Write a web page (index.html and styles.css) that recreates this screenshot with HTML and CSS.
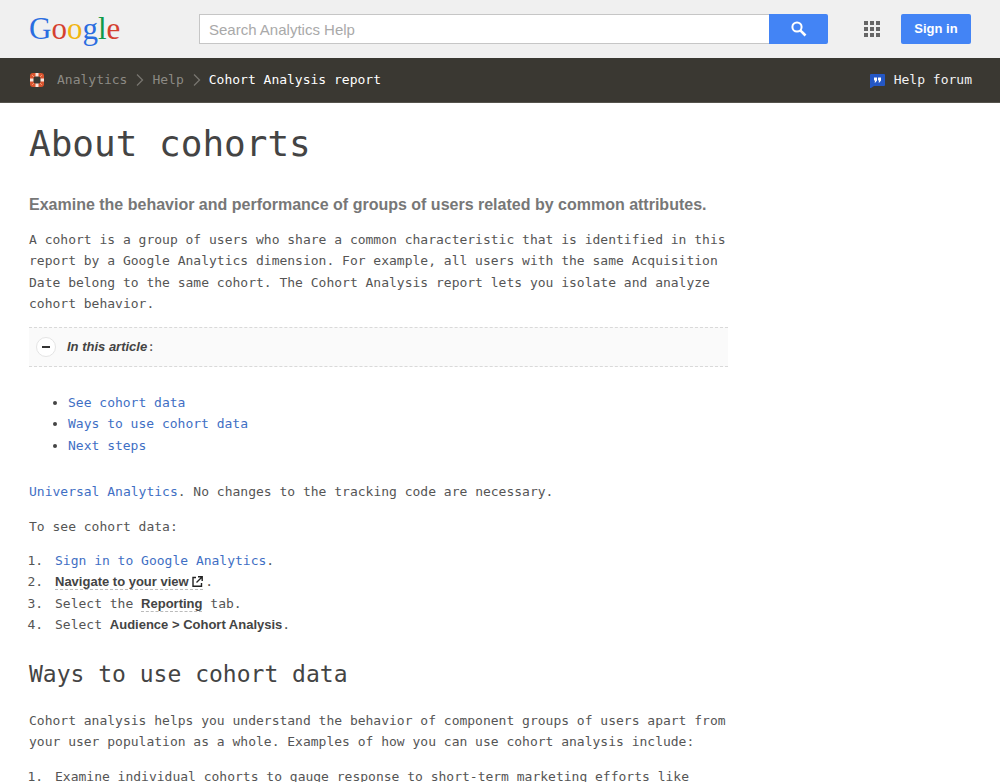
FILE: index.html
```
<!DOCTYPE html>
<html lang="en">
<head>
<meta charset="utf-8">
<meta name="viewport" content="width=device-width, initial-scale=1">
<title>About cohorts - Analytics Help</title>
<link rel="stylesheet" href="styles.css">
</head>
<body>
<header class="topbar">
  <a class="logo" href="#" aria-label="Google"><span class="blue">G</span><span class="red">o</span><span class="yellow">o</span><span class="blue">g</span><span class="green">l</span><span class="red">e</span></a>
  <form class="search">
    <input class="search-input" type="text" placeholder="Search Analytics Help" aria-label="Search Analytics Help">
    <button class="search-button" type="submit" aria-label="Search">
      <svg width="16" height="16" viewBox="0 0 16 16" fill="none" stroke="#fff" stroke-width="2"><circle cx="6" cy="6" r="4.6"/><path d="M9.3 9.3l5.2 5.2" stroke-width="2.6"/></svg>
    </button>
  </form>
  <button class="apps" type="button" aria-label="Apps">
    <svg width="16" height="16" viewBox="0 0 16 16" fill="#666"><path d="M0 0h4v4H0zM6 0h4v4H6zM12 0h4v4h-4zM0 6h4v4H0zM6 6h4v4H6zM12 6h4v4h-4zM0 12h4v4H0zM6 12h4v4H6zM12 12h4v4h-4z"/></svg>
  </button>
  <a class="signin" href="#">Sign in</a>
</header>
<nav class="crumbs">
  <svg class="product" width="14" height="14" viewBox="0 0 14 14"><rect width="14" height="14" rx="3" fill="#d9542f"/><path d="M5.5 0h3v4h-3zM5.5 10h3v4h-3zM0 5.500h4v3H0zM10 5.500h4v3h-4z" fill="#f8e6de"/><rect x="3.500" y="3.500" width="7" height="7" rx="2" fill="#3a3832"/><path d="M2 2l2 2M12 2l-2 2M2 12l2-2M12 12l-2-2" stroke="#f09a78"/></svg>
  <a class="crumb" href="#">Analytics</a>
  <svg class="chevron" width="8" height="12" viewBox="0 0 8 12" fill="none" stroke="#77756f" stroke-width="1.300"><path d="M1 .5L6.500 6 1 11.500"/></svg>
  <a class="crumb" href="#">Help</a>
  <svg class="chevron" width="8" height="12" viewBox="0 0 8 12" fill="none" stroke="#77756f" stroke-width="1.300"><path d="M1 .5L6.500 6 1 11.500"/></svg>
  <span class="current">Cohort Analysis report</span>
  <a class="forum" href="#">
    <svg width="15" height="15" viewBox="0 0 15 15"><path d="M1 1h13a1 1 0 0 1 1 1v10a1 1 0 0 1-1 1H4l-3 2H0V2a1 1 0 0 1 1-1z" fill="#2457c5"/><path d="M4 4.500h3v3L5.500 9.500H4.500L5.200 7.500H4zM8 4.500h3v3L9.500 9.500H8.500L9.200 7.500H8z" fill="#fff"/></svg>
    Help forum</a>
</nav>
<main class="article">
  <h1>About cohorts</h1>
  <p class="lead">Examine the behavior and performance of groups of users related by common attributes.</p>
  <p>A cohort is a group of users who share a common characteristic that is identified in this report by a Google Analytics dimension. For example, all users with the same Acquisition Date belong to the same cohort. The Cohort Analysis report lets you isolate and analyze cohort behavior.</p>
  <div class="toc-head">
    <button class="toggle" type="button" aria-label="Collapse"></button>
    <span><b><i>In this article</i></b>:</span>
  </div>
  <ul class="toc">
    <li><a href="#">See cohort data</a></li>
    <li><a href="#">Ways to use cohort data</a></li>
    <li><a href="#">Next steps</a></li>
  </ul>
  <p><a href="#">Universal Analytics</a>. No changes to the tracking code are necessary.</p>
  <p>To see cohort data:</p>
  <ol>
    <li><a href="#">Sign in to Google Analytics</a>.</li>
    <li><a class="term external" href="#">Navigate to your view <svg width="11" height="11" viewBox="0 0 11 11" fill="none" stroke="#222" stroke-width="1.400"><path d="M4 1.500H1v8.800h8.500V7M6 .8h4.200V5M10 1L4.500 6.500"/></svg></a>.</li>
    <li>Select the <b class="term">Reporting</b> tab.</li>
    <li>Select <b>Audience &gt; Cohort Analysis</b>.</li>
  </ol>
  <h2 id="ways">Ways to use cohort data</h2>
  <p>Cohort analysis helps you understand the behavior of component groups of users apart from your user population as a whole. Examples of how you can use cohort analysis include:</p>
  <ol>
    <li>Examine individual cohorts to gauge response to short-term marketing efforts like</li>
  </ol>
</main>
</body>
</html>
```
FILE: styles.css
```
* { box-sizing: border-box; }
html { overflow-x: hidden; scrollbar-width: none; }
body {
  margin: 0;
  background: #fff;
  color: #555;
  font: 13px/1.65 "DejaVu Sans Mono", monospace;
}
a { color: #3f6fc4; text-decoration: none; }
b { color: #444; font-family: "Liberation Sans", Arial, sans-serif; }
svg { flex: none; }

.topbar {
  display: flex;
  align-items: center;
  height: 58px;
  padding: 0 29px;
  background: #f0f0f0;
}
.logo {
  width: 170px;
  flex: none;
  font: 31px/36px "Liberation Serif", serif;
}
.blue { color: #2a6de0; }
.red { color: #d5402f; }
.yellow { color: #f2b50f; }
.green { color: #109a48; }
.search { display: flex; flex: 1; height: 30px; }
.search-input {
  flex: 1;
  min-width: 0;
  padding: 0 9px;
  border: 1px solid #c6c6c6;
  border-right: 0;
  border-radius: 0;
  background: #fff;
  color: #444;
  font: 15px "Liberation Sans", Arial, sans-serif;
}
.search-input::placeholder { color: #a9a9a9; opacity: 1; }
.search-button {
  display: flex;
  align-items: center;
  justify-content: center;
  width: 59px;
  padding: 0;
  border: 0;
  border-radius: 0 2px 2px 0;
  background: #4384f5;
}
.apps {
  display: flex;
  margin: 0 21px 0 36px;
  padding: 0;
  border: 0;
  background: none;
}
.signin {
  width: 70px;
  border-radius: 2px;
  background: #4384f5;
  color: #fff;
  font: bold 13px/30px "Liberation Sans", Arial, sans-serif;
  text-align: center;
}

.crumbs {
  display: flex;
  align-items: center;
  height: 45px;
  padding: 0 28px 0 30px;
  border-bottom: 1px solid #55534c;
  background: #3a3832;
}
.product { margin-right: 13px; }
.crumb { color: #8c8a84; }
.chevron { margin: 0 8px 0 9px; }
.current { color: #fff; }
.forum {
  display: flex;
  align-items: center;
  gap: 9px;
  margin-left: auto;
  color: #f2f2f2;
}

.article { max-width: 757px; padding: 18px 29px 0; }
h1 { margin: 0 0 26px; color: #444; font-size: 36px; line-height: 46px; font-weight: normal; }
h2 { margin: 24px 0 22px; color: #444; font-size: 23px; line-height: 28px; font-weight: normal; }
p { margin: 0 0 13px; }
.lead {
  margin-bottom: 12px;
  color: #777;
  font: bold 16px/24px "Liberation Sans", Arial, sans-serif;
}
.toc-head {
  display: flex;
  align-items: center;
  gap: 11px;
  height: 40px;
  margin-top: -1px;
  padding-left: 7px;
  border: dashed #d9d9d9;
  border-width: 1px 0;
  background: #fafafa;
}
.toggle {
  display: flex;
  align-items: center;
  justify-content: center;
  width: 20px;
  height: 20px;
  padding: 0;
  border: 1px solid #e4e4e4;
  border-radius: 50%;
  background: #fff;
}
.toggle::before { content: ""; width: 8px; height: 2px; background: #333; }
ul, ol { margin: 0 0 13px; }
ol { padding-left: 22px; }
ol li { padding-left: 4px; }
.toc { margin: 25px 0; padding-left: 39px; }
.toc li::marker { color: #444; }
.term {
  border-bottom: 1px dashed #bbb;
  color: #444;
  font: bold 13px/15px "Liberation Sans", Arial, sans-serif;
}
.external { margin-right: 2px; }
.term svg { vertical-align: -1px; }
```
